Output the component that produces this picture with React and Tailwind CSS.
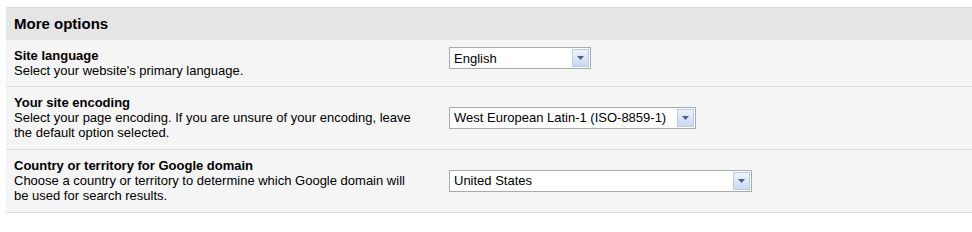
const rows = [
  {
    title: 'Site language',
    desc: ["Select your website's primary language."],
    value: 'English',
    width: 'w-[142px]',
    align: 'self-start mt-[-1px]',
    pad: 'pb-[8px]',
  },
  {
    title: 'Your site encoding',
    desc: ['Select your page encoding. If you are unsure of your encoding, leave', 'the default option selected.'],
    value: 'West European Latin-1 (ISO-8859-1)',
    width: 'w-[247px]',
    align: 'self-center',
    pad: 'pb-[9px]',
  },
  {
    title: 'Country or territory for Google domain',
    desc: ['Choose a country or territory to determine which Google domain will', 'be used for search results.'],
    value: 'United States',
    width: 'w-[303px]',
    align: 'self-center',
    pad: 'pb-[9px]',
  },
]

function Select({ value, width }) {
  return (
    <div className={`${width} h-[22px] flex items-center justify-between border border-[#a5acb2] bg-white pl-[4px] pr-[1px]`}>
      <span className="text-[13px] text-black leading-none">{value}</span>
      <span className="w-[17px] h-[18px] flex items-center justify-center border border-[#bccbe6] bg-gradient-to-b from-[#eef3fc] to-[#c9d8f3]">
        <svg width="7" height="4" viewBox="0 0 7 4">
          <path d="M0 0h7L3.5 4z" fill="#4d6185" />
        </svg>
      </span>
    </div>
  )
}

export default function App() {
  return (
    <div className="w-[972px] h-[232px] bg-white pt-[7px] pl-[6px] font-['Liberation_Sans',Arial,sans-serif]">
      <div className="bg-[#f5f5f5]">
        <div className="h-[33px] bg-[#e5e5e5] border-t border-[#dadada] flex items-center pl-[8px]">
          <h2 className="text-[15px] font-bold text-black">More options</h2>
        </div>
        {rows.map((row) => (
          <div key={row.title} className={`flex border-b border-[#dcdcdc] pt-[8px] ${row.pad} pl-[8px]`}>
            <div className="w-[435px] pr-[20px] text-[13px] leading-[15px] text-black">
              <div className="font-bold">{row.title}</div>
              {row.desc.map((line) => (
                <div key={line} className="whitespace-nowrap">{line}</div>
              ))}
            </div>
            <div className={row.align}>
              <Select value={row.value} width={row.width} />
            </div>
          </div>
        ))}
      </div>
    </div>
  )
}
